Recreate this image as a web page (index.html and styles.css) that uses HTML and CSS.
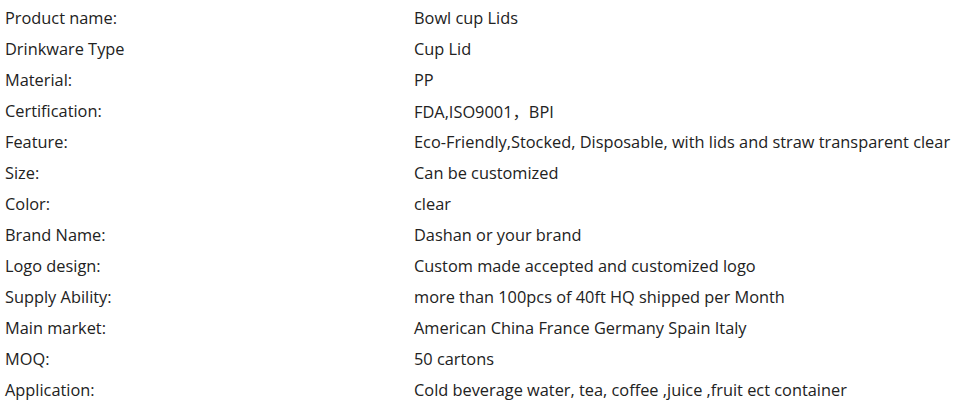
FILE: index.html
```html
<!DOCTYPE html>
<html>
<head>
<meta charset="utf-8">
<link rel="stylesheet" href="styles.css">
</head>
<body>
<div class="spec">
  <div class="row"><div class="k">Product name:</div><div class="v">Bowl cup Lids</div></div>
  <div class="row"><div class="k">Drinkware Type</div><div class="v">Cup Lid</div></div>
  <div class="row"><div class="k">Material:</div><div class="v">PP</div></div>
  <div class="row"><div class="k">Certification:</div><div class="v">FDA,ISO9001，BPI</div></div>
  <div class="row"><div class="k">Feature:</div><div class="v">Eco-Friendly,Stocked, Disposable, with lids and straw transparent clear</div></div>
  <div class="row"><div class="k">Size:</div><div class="v">Can be customized</div></div>
  <div class="row"><div class="k">Color:</div><div class="v">clear</div></div>
  <div class="row"><div class="k">Brand Name:</div><div class="v">Dashan or your brand</div></div>
  <div class="row"><div class="k">Logo design:</div><div class="v">Custom made accepted and customized logo</div></div>
  <div class="row"><div class="k">Supply Ability:</div><div class="v">more than 100pcs of 40ft HQ shipped per Month</div></div>
  <div class="row"><div class="k">Main market:</div><div class="v">American China France Germany Spain Italy</div></div>
  <div class="row"><div class="k">MOQ:</div><div class="v">50 cartons</div></div>
  <div class="row"><div class="k">Application:</div><div class="v">Cold beverage water, tea, coffee ,juice ,fruit ect container</div></div>
</div>
</body>
</html>
```
FILE: styles.css
```css
html, body {
  margin: 0;
  background: #fff;
}
.spec {
  padding: 2px 0 0 5px;
  font-family: "Open Sans", "Noto Sans CJK SC", sans-serif;
  font-size: 16.35px;
  color: #222;
}
.row {
  display: flex;
  height: 31px;
  align-items: center;
}
.k {
  width: 409px;
  flex: none;
}
.v {
  white-space: nowrap;
}
```
